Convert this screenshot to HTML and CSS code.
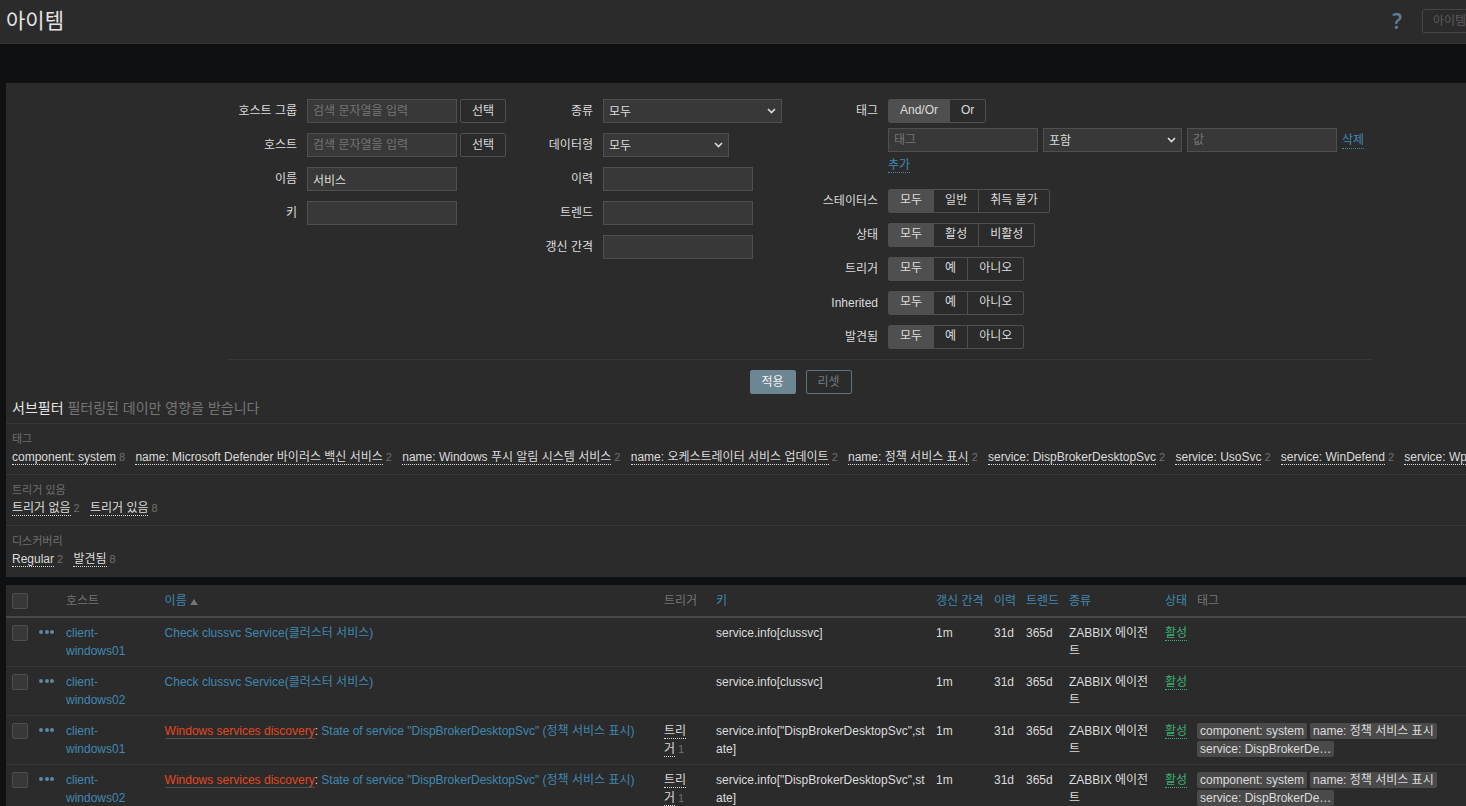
FILE: index.html
```html
<!DOCTYPE html>
<html lang="ko">
<head>
<meta charset="utf-8">
<title>아이템</title>
<link rel="stylesheet" href="styles.css">
</head>
<body>
<div class="page">
  <header class="topbar">
    <h1 class="title">아이템</h1>
    <div class="top-actions">
      <span class="help">?</span>
      <button class="ghost-btn" type="button">아이템 생성</button>
    </div>
  </header>

  <main class="content">
    <section class="filter">
      <form class="filter-form">
        <div class="fcol fcol-1">
          <label class="flabel">호스트 그룹</label>
          <div class="fctl"><input class="inp" placeholder="검색 문자열을 입력"><button class="btn" type="button">선택</button></div>
          <label class="flabel">호스트</label>
          <div class="fctl"><input class="inp" placeholder="검색 문자열을 입력"><button class="btn" type="button">선택</button></div>
          <label class="flabel">이름</label>
          <div class="fctl"><input class="inp" value="서비스"></div>
          <label class="flabel">키</label>
          <div class="fctl"><input class="inp"></div>
        </div>
        <div class="fcol fcol-2">
          <label class="flabel">종류</label>
          <div class="fctl"><select class="sel sel-type"><option>모두</option></select></div>
          <label class="flabel">데이터형</label>
          <div class="fctl"><select class="sel sel-data"><option>모두</option></select></div>
          <label class="flabel">이력</label>
          <div class="fctl"><input class="inp"></div>
          <label class="flabel">트렌드</label>
          <div class="fctl"><input class="inp"></div>
          <label class="flabel">갱신 간격</label>
          <div class="fctl"><input class="inp"></div>
        </div>
        <div class="fcol fcol-3">
          <label class="flabel">태그</label>
          <div class="tagblock">
            <div class="seg"><span class="seg-item on">And/Or</span><span class="seg-item">Or</span></div>
            <div class="tagrow">
              <input class="inp" placeholder="태그">
              <select class="sel sel-op"><option>포함</option></select>
              <input class="inp" placeholder="값">
              <a class="link dotted">삭제</a>
            </div>
            <div class="addrow"><a class="link dotted">추가</a></div>
          </div>
          <label class="flabel">스테이터스</label>
          <div class="seg"><span class="seg-item on">모두</span><span class="seg-item">일반</span><span class="seg-item">취득 불가</span></div>
          <label class="flabel">상태</label>
          <div class="seg"><span class="seg-item on">모두</span><span class="seg-item">활성</span><span class="seg-item">비활성</span></div>
          <label class="flabel">트리거</label>
          <div class="seg"><span class="seg-item on">모두</span><span class="seg-item">예</span><span class="seg-item">아니오</span></div>
          <label class="flabel">Inherited</label>
          <div class="seg"><span class="seg-item on">모두</span><span class="seg-item">예</span><span class="seg-item">아니오</span></div>
          <label class="flabel">발견됨</label>
          <div class="seg"><span class="seg-item on">모두</span><span class="seg-item">예</span><span class="seg-item">아니오</span></div>
        </div>
      </form>
      <div class="form-actions">
        <button class="btn primary" type="button">적용</button>
        <button class="btn outline" type="button">리셋</button>
      </div>

      <div class="subfilter-head"><span class="sf-title">서브필터</span> <span class="sf-hint">필터링된 데이만 영향을 받습니다</span></div>
      <div class="sf-group">
        <div class="sf-label">태그</div>
        <div class="sf-items">
          <span class="sf-item"><a class="dotted">component: system</a><em>8</em></span>
          <span class="sf-item"><a class="dotted">name: Microsoft Defender 바이러스 백신 서비스</a><em>2</em></span>
          <span class="sf-item"><a class="dotted">name: Windows 푸시 알림 시스템 서비스</a><em>2</em></span>
          <span class="sf-item"><a class="dotted">name: 오케스트레이터 서비스 업데이트</a><em>2</em></span>
          <span class="sf-item"><a class="dotted">name: 정책 서비스 표시</a><em>2</em></span>
          <span class="sf-item"><a class="dotted">service: DispBrokerDesktopSvc</a><em>2</em></span>
          <span class="sf-item"><a class="dotted">service: UsoSvc</a><em>2</em></span>
          <span class="sf-item"><a class="dotted">service: WinDefend</a><em>2</em></span>
          <span class="sf-item"><a class="dotted">service: WpnService</a><em>2</em></span>
        </div>
      </div>
      <div class="sf-group">
        <div class="sf-label">트리거 있음</div>
        <div class="sf-items">
          <span class="sf-item"><a class="dotted">트리거 없음</a><em>2</em></span>
          <span class="sf-item"><a class="dotted">트리거 있음</a><em>8</em></span>
        </div>
      </div>
      <div class="sf-group">
        <div class="sf-label">디스커버리</div>
        <div class="sf-items">
          <span class="sf-item"><a class="dotted">Regular</a><em>2</em></span>
          <span class="sf-item"><a class="dotted">발견됨</a><em>8</em></span>
        </div>
      </div>
    </section>

    <section class="list">
      <table class="items">
        <colgroup>
          <col class="c-check"><col class="c-dots"><col class="c-host"><col class="c-name"><col class="c-trig"><col class="c-key"><col class="c-int"><col class="c-hist"><col class="c-trend"><col class="c-type"><col class="c-stat"><col class="c-tags">
        </colgroup>
        <thead>
          <tr>
            <th><span class="check"></span></th>
            <th></th>
            <th>호스트</th>
            <th><a class="link">이름</a><span class="sort-up"></span></th>
            <th>트리거</th>
            <th><a class="link">키</a></th>
            <th><a class="link">갱신 간격</a></th>
            <th><a class="link">이력</a></th>
            <th><a class="link">트렌드</a></th>
            <th><a class="link">종류</a></th>
            <th><a class="link">상태</a></th>
            <th>태그</th>
          </tr>
        </thead>
        <tbody>
          <tr>
            <td><span class="check"></span></td>
            <td><span class="dots"><i></i><i></i><i></i></span></td>
            <td><a class="link">client-windows01</a></td>
            <td><a class="link">Check clussvc Service(클러스터 서비스)</a></td>
            <td class="trig"></td>
            <td class="key">service.info[clussvc]</td>
            <td>1m</td><td>31d</td><td>365d</td>
            <td>ZABBIX 에이전트</td>
            <td class="stat"><a class="on-state dotted">활성</a></td>
            <td></td>
          </tr>
          <tr>
            <td><span class="check"></span></td>
            <td><span class="dots"><i></i><i></i><i></i></span></td>
            <td><a class="link">client-windows02</a></td>
            <td><a class="link">Check clussvc Service(클러스터 서비스)</a></td>
            <td class="trig"></td>
            <td class="key">service.info[clussvc]</td>
            <td>1m</td><td>31d</td><td>365d</td>
            <td>ZABBIX 에이전트</td>
            <td class="stat"><a class="on-state dotted">활성</a></td>
            <td></td>
          </tr>
          <tr>
            <td><span class="check"></span></td>
            <td><span class="dots"><i></i><i></i><i></i></span></td>
            <td><a class="link">client-windows01</a></td>
            <td><a class="parent">Windows services discovery</a>: <a class="link">State of service "DispBrokerDesktopSvc" (정책 서비스 표시)</a></td>
            <td class="trig"><a class="dotted">트리거</a><em class="count">1</em></td>
            <td class="key">service.info["DispBrokerDesktopSvc",state]</td>
            <td>1m</td><td>31d</td><td>365d</td>
            <td>ZABBIX 에이전트</td>
            <td class="stat"><a class="on-state dotted">활성</a></td>
            <td><div class="tags"><span class="tag">component: system</span><span class="tag">name: 정책 서비스 표시</span><span class="tag">service: DispBrokerDe…</span></div></td>
          </tr>
          <tr>
            <td><span class="check"></span></td>
            <td><span class="dots"><i></i><i></i><i></i></span></td>
            <td><a class="link">client-windows02</a></td>
            <td><a class="parent">Windows services discovery</a>: <a class="link">State of service "DispBrokerDesktopSvc" (정책 서비스 표시)</a></td>
            <td class="trig"><a class="dotted">트리거</a><em class="count">1</em></td>
            <td class="key">service.info["DispBrokerDesktopSvc",state]</td>
            <td>1m</td><td>31d</td><td>365d</td>
            <td>ZABBIX 에이전트</td>
            <td class="stat"><a class="on-state dotted">활성</a></td>
            <td><div class="tags"><span class="tag">component: system</span><span class="tag">name: 정책 서비스 표시</span><span class="tag">service: DispBrokerDe…</span></div></td>
          </tr>
        </tbody>
      </table>
    </section>
  </main>
</div>
</body>
</html>
```
FILE: styles.css
```css
* { box-sizing: border-box; }
html, body { margin: 0; height: 100%; overflow: hidden; background: #0e1012; }
body {
  font-family: "Liberation Sans", "Noto Sans CJK KR", sans-serif;
  font-size: 12px;
  line-height: 18px;
  color: #dcdcdc;
}
.page { width: 1600px; }

.topbar {
  height: 44px;
  padding: 0 0 2px 6px;
  background: #2b2b2b;
  border-bottom: 1px solid #333;
  display: flex;
  align-items: center;
  justify-content: space-between;
}
.title { margin: 0; font-size: 21px; font-weight: 400; line-height: 42px; color: #e4e4e4; }
.top-actions { display: flex; align-items: center; }
.help { font-family: "Noto Sans", sans-serif; font-size: 21px; font-weight: 600; color: #5d7f94; margin-right: 20px; width: 10px; text-align: center; }
.ghost-btn {
  width: 172px; height: 24px; padding: 0 10px; margin-right: 6px;
  background: transparent; border: 1px solid #454545; border-radius: 2px;
  font: inherit; color: #5c5c5c; text-align: left;
}

.content { padding: 39px 6px 0; }
.filter { background: #2b2b2b; height: 494px; }

.filter-form { display: flex; width: 1146px; margin: 0 auto; padding-top: 16px; height: 277px; border-bottom: 1px solid #383838; }
.fcol { display: grid; column-gap: 10px; row-gap: 10px; align-content: start; grid-auto-rows: min-content; }
.fcol-1 { width: 289px; grid-template-columns: 70px 1fr; }
.fcol-2 { width: 285px; grid-template-columns: 77px 1fr; }
.fcol-3 { width: 572px; grid-template-columns: 77px 1fr; }
.flabel { text-align: right; line-height: 24px; height: 24px; white-space: nowrap; }
.fctl { display: flex; gap: 3px; height: 24px; }

.inp {
  width: 150px; height: 24px; padding: 0 5px;
  background: #383838; border: 1px solid #4f4f4f;
  font: inherit; color: #dcdcdc; outline: none;
}
.inp::placeholder { color: #757575; opacity: 1; }
.sel {
  appearance: none;
  height: 24px; padding: 2px 16px 0 5px; border: 1px solid #4f4f4f; border-radius: 0;
  background: #383838 url("data:image/svg+xml,%3Csvg xmlns='http://www.w3.org/2000/svg' width='9' height='6'%3E%3Cpath d='M1 1l3.5 3.5L8 1' fill='none' stroke='%23dcdcdc' stroke-width='1.6'/%3E%3C/svg%3E") no-repeat right 5px center;
  font: inherit; color: #dcdcdc;
}
.sel-type { width: 179px; }
.sel-data { width: 126px; }
.sel-op { width: 139px; }

.btn {
  height: 24px; padding: 0; background: #2b2b2b; border: 1px solid #4f4f4f; border-radius: 2px;
  font: inherit; color: #dcdcdc; width: 46px;
}
.btn.primary { background: #6c8694; border-color: #6c8694; color: #f2f2f2; }
.btn.outline { border-color: #5c7380; color: #6e7c84; }

.tagblock { display: flex; flex-direction: column; align-items: flex-start; gap: 5px; height: 80px; }
.tagrow { display: flex; gap: 5px; height: 24px; }
.addrow { height: 20px; line-height: 18px; margin-top: -1px; }
.link { color: #4088b0; }
.dotted { border-bottom: 1px dotted currentColor; }
.tagrow .link { align-self: center; line-height: 15px; margin-top: 2px; }

.seg { display: inline-flex; justify-self: start; height: 24px; border: 1px solid #4f4f4f; border-radius: 2px; }
.seg-item { padding: 0 11px; line-height: 21px; border-left: 1px solid #4f4f4f; }
.seg-item:first-child { border-left: 0; }
.seg-item.on { background: #4f4f4f; }

.form-actions { display: flex; justify-content: center; gap: 10px; padding-top: 10px; margin-left: 1px; }

.subfilter-head { padding: 5px 6px 0; height: 30px; font-size: 14px; line-height: 18px; border-bottom: 1px solid #383838; }
.sf-title { color: #e4e4e4; }
.sf-hint { color: #757575; }
.sf-group { height: 51px; padding: 5px 6px 0; border-bottom: 1px solid #383838; }
.sf-group:last-child { border-bottom: 0; }
.sf-label { font-size: 11px; line-height: 20px; color: #6e6e6e; }
.sf-items { display: flex; white-space: nowrap; line-height: 16px; }
.sf-item { margin-right: 10.25px; }
.sf-item em, .count { font-style: normal; font-size: 11px; color: #6e6e6e; margin-left: 3px; }

.list { margin-top: 8px; background: #2b2b2b; }
.items { table-layout: fixed; width: 1588px; border-collapse: collapse; }
.c-check { width: 28px; } .c-dots { width: 27px; } .c-host { width: 98.6px; } .c-name { width: 499.4px; }
.c-trig { width: 52px; } .c-key { width: 220px; } .c-int { width: 58px; } .c-hist { width: 32px; }
.c-trend { width: 43px; } .c-type { width: 96px; } .c-stat { width: 32px; } .c-tags { width: 402px; }
th {
  height: 32px; padding: 0 5px; text-align: left; font-weight: 400; color: #757575;
  border-bottom: 2px solid #484848; white-space: nowrap;
}
td { padding: 6px 5px; vertical-align: top; height: 49px; border-bottom: 1px solid #383838; }
th:first-child, td:first-child { padding-left: 6px; }
.trig { padding-right: 15px; }
.stat { white-space: nowrap; }
.check { display: block; width: 16px; height: 16px; background: #383838; border: 1px solid #4f4f4f; border-radius: 2px; }
td .check { margin-top: 1px; }
.sort-up { display: inline-block; margin-left: 3px; border-left: 4px solid transparent; border-right: 4px solid transparent; border-bottom: 6px solid #757575; }
.dots { display: flex; gap: 1.5px; padding-top: 6px; }
.dots i { width: 4px; height: 4px; border-radius: 50%; background: #5f88a3; }
.parent { color: #e4481f; border-bottom: 1px solid #4f4f4f; }
.key { word-break: break-all; }
.on-state { color: #3cae73; }
.tags { display: flex; flex-wrap: wrap; gap: 2px 3px; width: 245px; margin-top: -1px; padding-top: 2px; }
.tag { height: 16px; line-height: 16px; padding: 0 3px; background: #4a4a4a; border-radius: 2px; white-space: nowrap; }
```
